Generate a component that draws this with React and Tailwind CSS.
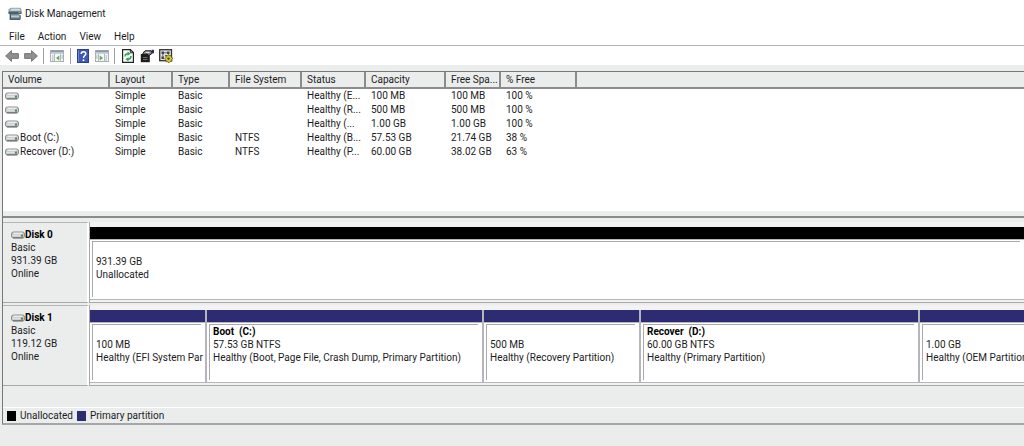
import { clsx } from "clsx";

const columns = [
  { label: "Volume", width: "w-[107px]" },
  { label: "Layout", width: "w-[63px]" },
  { label: "Type", width: "w-[57px]" },
  { label: "File System", width: "w-[72px]" },
  { label: "Status", width: "w-[64px]" },
  { label: "Capacity", width: "w-[80px]" },
  { label: "Free Spa...", width: "w-[55px]" },
  { label: "% Free", width: "w-[76px]" },
];

const volumes = [
  ["", "Simple", "Basic", "", "Healthy (E...", "100 MB", "100 MB", "100 %"],
  ["", "Simple", "Basic", "", "Healthy (R...", "500 MB", "500 MB", "100 %"],
  ["", "Simple", "Basic", "", "Healthy (...", "1.00 GB", "1.00 GB", "100 %"],
  ["Boot (C:)", "Simple", "Basic", "NTFS", "Healthy (B...", "57.53 GB", "21.74 GB", "38 %"],
  ["Recover (D:)", "Simple", "Basic", "NTFS", "Healthy (P...", "60.00 GB", "38.02 GB", "63 %"],
];

const disks = [
  {
    name: "Disk 0",
    size: "931.39 GB",
    parts: [{ size: "931.39 GB", status: "Unallocated", bar: "bg-black", width: "flex-1" }],
  },
  {
    name: "Disk 1",
    size: "119.12 GB",
    parts: [
      { size: "100 MB", status: "Healthy (EFI System Par", bar: "bg-[#2d2b72]", width: "w-[117px]" },
      {
        name: "Boot  (C:)",
        size: "57.53 GB NTFS",
        status: "Healthy (Boot, Page File, Crash Dump, Primary Partition)",
        bar: "bg-[#2d2b72]",
        width: "w-[277px]",
      },
      { size: "500 MB", status: "Healthy (Recovery Partition)", bar: "bg-[#2d2b72]", width: "w-[157px]" },
      {
        name: "Recover  (D:)",
        size: "60.00 GB NTFS",
        status: "Healthy (Primary Partition)",
        bar: "bg-[#2d2b72]",
        width: "w-[279px]",
      },
      { size: "1.00 GB", status: "Healthy (OEM Partition)", bar: "bg-[#2d2b72]", width: "flex-1" },
    ],
  },
];

function DriveIcon() {
  return (
    <svg viewBox="0 0 14 8" className="h-2 w-[14px] shrink-0" aria-hidden="true">
      <rect x=".5" y="1" width="13" height="6" rx="2" fill="#c6c8cb" stroke="#8b8d90" />
      <path d="M2.500 2.300h9" stroke="#eef0f1" strokeWidth="1.300" />
      <path d="M1.500 4.500h8" stroke="#dfe1e3" strokeWidth="1.500" />
      <path d="M2 6.800h10" stroke="#66686b" />
      <rect x="10" y="3.600" width="2" height="2" fill="#4d8a55" />
    </svg>
  );
}

function AppIcon() {
  return (
    <svg viewBox="0 0 14 14" className="h-[14px] w-[14px]" aria-hidden="true">
      <path d="M1.500 1.500 3 .8h9.500l1 1.700v4H.5v-4z" fill="#9aa7af" />
      <path d="M3.500 1.800h8l1 2H2z" fill="#d2dade" />
      <path d="M.5 4.500h13v2.500H.5z" fill="#4d616c" />
      <path d="M10.500 5.500h2" stroke="#79bd86" />
      <path d="M1.500 7h9l2.500 1.500V12l-1 1H1.500z" fill="#748994" />
      <path d="M3 8.500h8v1.800H3z" fill="#bccad2" />
      <path d="M2 12.200h10" stroke="#3d505b" />
      <path d="M2.500 7v5" stroke="#41565f" />
    </svg>
  );
}

function ArrowIcon({ flip }) {
  return (
    <svg viewBox="0 0 14 12" className={clsx("h-3 w-[14px]", flip && "-scale-x-100")} aria-hidden="true">
      <path d="M.6 6 6.500.6v3h6.900v4.800H6.500v3z" fill="#8f8f8f" stroke="#727272" strokeWidth=".9" strokeLinejoin="round" />
    </svg>
  );
}

function PaneIcon({ flip }) {
  return (
    <svg viewBox="0 0 14 12" className={clsx("h-3 w-[14px]", flip && "-scale-x-100")} aria-hidden="true">
      <rect x=".5" y=".5" width="13" height="11" fill="#f6f7f8" stroke="#a9afb5" />
      <path d="M1 1.500h12" stroke="#8799ab" strokeWidth="2" />
      <path d="M1 3.500h12" stroke="#c9ced3" />
      <path d="M4.500 4v7.500M10.500 4v7.500" stroke="#b3bac1" />
      <path d="M2 6h1.500M2 8h1.500M2 10h1.500M11.500 6H13M11.500 8H13" stroke="#8ba7c2" />
      <path d="M9.300 5.500v5L6 8z" fill="#5fae50" />
    </svg>
  );
}

function HelpIcon() {
  return (
    <svg viewBox="0 0 12 14" className="h-[14px] w-3" aria-hidden="true">
      <rect x=".5" y=".5" width="11" height="13" fill="#3e58b4" stroke="#2b3f8c" />
      <path d="M1.500 1v12" stroke="#7187cf" />
      <path d="M4.200 5c0-3.200 4.600-3 4.600-.3C8.800 6.500 6.500 6.700 6.500 9" fill="none" stroke="#fff" strokeWidth="1.500" />
      <circle cx="6.500" cy="11.200" r="1" fill="#fff" />
    </svg>
  );
}

function RefreshIcon() {
  return (
    <svg viewBox="0 0 12 14" className="h-[14px] w-3" aria-hidden="true">
      <path d="M.6.600h7.800l3 3v9.800H.6z" fill="#fff" stroke="#222" strokeWidth="1.200" />
      <path d="M8.300.600v3.200h3.100" fill="none" stroke="#222" />
      <path d="M3 7.500C3 5.500 4.200 4.800 6 4.800M9 7c0 2.500-1.200 3.200-3 3.200" fill="none" stroke="#33a352" strokeWidth="1.500" />
      <path d="M5.500 2.500l3 2.300-3 2.200zM6.500 8l-3 2.200 3 2.300z" fill="#33a352" />
    </svg>
  );
}

function PropertiesIcon() {
  return (
    <svg viewBox="0 0 14 14" className="h-[14px] w-[14px]" aria-hidden="true">
      <path d="M.8 5h9v8.200h-9z" fill="#1d1d1d" />
      <path d="M3 8.500h4.500M3 10.500h4.500" stroke="#6d6d6d" />
      <path d="M3 5.500V4l2-2.200h6L12.500 4 9 6.500 6.500 5z" fill="#8a8a8a" stroke="#181818" />
      <path d="M5.500 3.300h4" stroke="#f0f0f0" />
      <path d="M11.500.800H14v3.500h-2.500z" fill="#2d2d66" />
    </svg>
  );
}

function SettingsIcon() {
  return (
    <svg viewBox="0 0 14 14" className="h-[14px] w-[14px]" aria-hidden="true">
      <rect x=".7" y=".7" width="11.800" height="11" fill="#e2e2e2" stroke="#333" strokeWidth="1.300" />
      <path d="M2.500 2.500h2.500V5H2.500zM2.500 7.500H5V10H2.500zM8 2.500h2.500V5H8z" fill="#444" />
      <path d="M5 3.800h3M3.800 5v3M6 6.500h2" stroke="#666" />
      <path d="M9.500 5.500l1 1.300 1.700-.3.200 1.700 1.400 1-1 1.300.2 1.700-1.800.2-1.200 1.400-1.300-1.100-1.700.1-.1-1.800L5.600 9.800l1.200-1.200.1-1.800 1.700.1z" fill="#d8cb35" stroke="#46420f" strokeWidth=".7" />
      <circle cx="9.500" cy="9.600" r="1.200" fill="#46420f" />
    </svg>
  );
}

function ToolButton({ label, children }) {
  return (
    <button type="button" aria-label={label} className="flex h-4 w-4 items-center justify-center">
      {children}
    </button>
  );
}

function Divider() {
  return <span className="h-4 w-px bg-[#a0a0a0]" />;
}

function Toolbar() {
  return (
    <div className="flex h-5 items-center border-t border-[#b4b4b4] bg-white pl-1">
      <div className="flex gap-[3px] pr-1">
        <ToolButton label="Back"><ArrowIcon /></ToolButton>
        <ToolButton label="Forward"><ArrowIcon flip /></ToolButton>
      </div>
      <Divider />
      <div className="px-[5px]">
        <ToolButton label="Show or hide console tree"><PaneIcon /></ToolButton>
      </div>
      <Divider />
      <div className="flex gap-[3px] px-1">
        <ToolButton label="Help"><HelpIcon /></ToolButton>
        <ToolButton label="Show or hide action pane"><PaneIcon flip /></ToolButton>
      </div>
      <Divider />
      <div className="flex gap-[3px] px-[5px]">
        <ToolButton label="Refresh"><RefreshIcon /></ToolButton>
        <ToolButton label="Properties"><PropertiesIcon /></ToolButton>
        <ToolButton label="Settings"><SettingsIcon /></ToolButton>
      </div>
    </div>
  );
}

function VolumeTable() {
  return (
    <div className="h-[140px] overflow-hidden border-t border-[#777] bg-white">
      <table className="w-full table-fixed border-separate border-spacing-0 text-left">
        <thead>
          <tr className="bg-[#ebecec]">
            {columns.map((column) => (
              <th
                key={column.label}
                scope="col"
                className={clsx(
                  "border-r-2 border-b-2 border-[#8b8b8b] pl-[5px] font-normal leading-[15px] whitespace-nowrap",
                  column.width,
                )}
              >
                {column.label}
              </th>
            ))}
            <td className="border-b-2 border-[#8b8b8b]" />
          </tr>
        </thead>
        <tbody>
          {volumes.map((row, i) => (
            <tr key={i}>
              {row.map((cell, j) => (
                <td key={j} className={clsx("h-[14px] leading-[14px] whitespace-nowrap", j === 0 ? "pl-[2px]" : "pl-[5px]")}>
                  {j === 0 ? (
                    <span className="flex items-center gap-px">
                      <DriveIcon />
                      {cell}
                    </span>
                  ) : (
                    cell
                  )}
                </td>
              ))}
              <td />
            </tr>
          ))}
        </tbody>
      </table>
    </div>
  );
}

function Partition({ part }) {
  return (
    <div className={clsx("flex shrink-0 flex-col border-r-2 border-[#b5b5bb] last:border-r-0", part.width)}>
      <div className={clsx("h-3 shrink-0", part.bar)} />
      <div className="flex-1 border-y border-[#b5b5bb] bg-white pt-px pl-[2px]">
        <div className="mr-1 h-14 border-t border-l border-[#a9a9ad] pl-[3px] whitespace-pre">
          <p className="h-[13px] font-bold text-black">{part.name}</p>
          <p>{part.size}</p>
          <p>{part.status}</p>
        </div>
      </div>
    </div>
  );
}

function DiskRow({ disk }) {
  return (
    <section className="flex h-[81px] leading-[13px]">
      <div className="w-[86px] shrink-0 border-t border-r-2 border-b border-t-[#b4b4b4] border-r-white border-b-[#a8a8a8] bg-[#ebecec] pt-[5px] pl-2">
        <h2 className="flex items-center font-bold text-black">
          <DriveIcon />
          {disk.name}
        </h2>
        <p>Basic</p>
        <p>{disk.size}</p>
        <p>Online</p>
      </div>
      <div className="flex min-w-0 flex-1 overflow-hidden border-b border-l border-[#a8a8a8] bg-[#f2f2f2] pt-[5px] pb-[2px]">
        {disk.parts.map((part) => (
          <Partition key={part.status} part={part} />
        ))}
      </div>
    </section>
  );
}

export default function App() {
  return (
    <div className="min-h-screen overflow-hidden bg-[#ebecec] font-['Roboto','Open_Sans',sans-serif] text-[10px] text-[#1c1c24]">
      <header className="bg-white">
        <div className="flex h-[27px] items-center gap-[3px] pl-2">
          <AppIcon />
          <h1>Disk Management</h1>
        </div>
        <nav className="flex h-[18px] items-center gap-[13px] pl-[9px]">
          <button type="button">File</button>
          <button type="button">Action</button>
          <button type="button">View</button>
          <button type="button">Help</button>
        </nav>
        <Toolbar />
      </header>
      <main className="mt-[6px] ml-[2px] border-b-2 border-l border-b-[#a6a6a6] border-l-[#777]">
        <VolumeTable />
        <div className="mt-[5px] flex flex-col gap-[2px] border-t-2 border-[#8b8b8b] pt-1">
          {disks.map((disk) => (
            <DiskRow key={disk.name} disk={disk} />
          ))}
        </div>
        <footer className="mt-[21px] flex h-4 items-center gap-1 border-t border-white pl-1">
          <span className="h-[10px] w-[9px] bg-black" />
          <span>Unallocated</span>
          <span className="h-[10px] w-[9px] bg-[#2d2b72]" />
          <span>Primary partition</span>
        </footer>
      </main>
    </div>
  );
}
